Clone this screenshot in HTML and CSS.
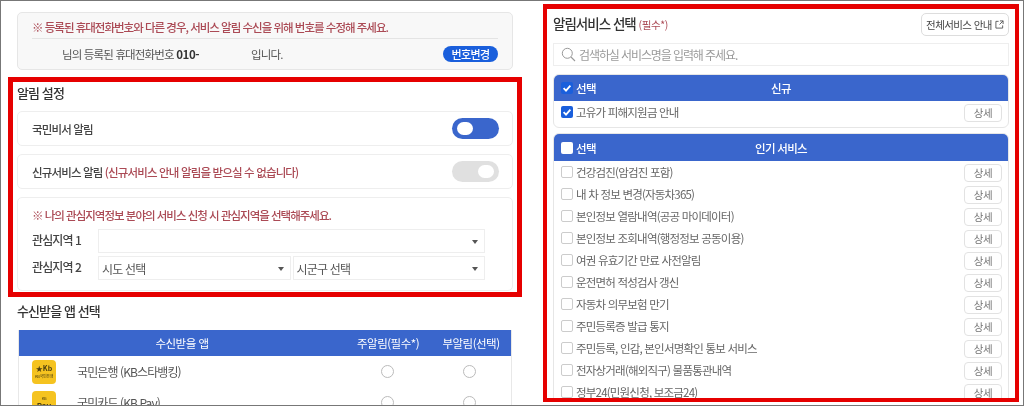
FILE: index.html
```html
<!DOCTYPE html>
<html lang="ko">
<head>
<meta charset="utf-8">
<title>알림 설정</title>
<link rel="stylesheet" href="styles.css">
</head>
<body>
<div class="frame">
  <div class="left">
    <div class="info">
      <p class="warn info-warn">※ 등록된 휴대전화번호와 다른 경우, 서비스 알림 수신을 위해 번호를 수정해 주세요.</p>
      <div class="info-line">
        <span class="info-a">님의 등록된 휴대전화번호 <b>010-</b></span>
        <span class="info-b">입니다.</span>
        <span class="change">번호변경</span>
      </div>
    </div>
    <section class="red-left">
      <h2 class="title-a">알림 설정</h2>
      <div class="card">
        <span class="card-label">국민비서 알림</span>
        <span class="toggle on"><i></i></span>
      </div>
      <div class="card">
        <span class="card-label">신규서비스 알림 <em class="warn-inline">(신규서비스 안내 알림을 받으실 수 없습니다)</em></span>
        <span class="toggle off"><i></i></span>
      </div>
      <div class="area">
        <p class="warn area-warn">※ 나의 관심지역정보 분야의 서비스 신청 시 관심지역을 선택해주세요.</p>
        <div class="area-row">
          <span class="area-label">관심지역 1</span>
          <div class="sel sel-wide"></div>
        </div>
        <div class="area-row second">
          <span class="area-label">관심지역 2</span>
          <div class="sel">시도 선택</div>
          <div class="sel">시군구 선택</div>
        </div>
      </div>
    </section>
    <h2 class="title-b">수신받을 앱 선택</h2>
    <div class="apps">
      <div class="apps-head">
        <span class="col-name">수신받을 앱</span>
        <span class="col-main">주알림(필수*)</span>
        <span class="col-sub">부알림(선택)</span>
      </div>
      <div class="app-row">
        <span class="app-icon"><span class="kb-star">★Kb</span><span class="kb-tiny">KB국민은행</span></span>
        <span class="app-name">국민은행 (KB스타뱅킹)</span>
        <span class="radio r-main"></span>
        <span class="radio r-sub"></span>
      </div>
      <div class="app-row">
        <span class="app-icon"><span class="kb-tiny">KB</span><span class="kb-pay">Pay</span></span>
        <span class="app-name">국민카드 (KB Pay)</span>
        <span class="radio r-main"></span>
        <span class="radio r-sub"></span>
      </div>
    </div>
  </div>

  <section class="red-right">
    <div class="right-head">
      <h2 class="title-c">알림서비스 선택 <em class="req">(필수*)</em></h2>
      <span class="all-btn">전체서비스 안내
        <svg class="ext" viewBox="0 0 10 10" width="9" height="9"><path d="M4 1.5H1v7.5h7.5V6M5.5 1H9v3.5M9 1 5 5" fill="none" stroke="#555" stroke-width="1"/></svg>
      </span>
    </div>
    <div class="search">
      <svg viewBox="0 0 15 15" width="15" height="15"><circle cx="6.3" cy="6.3" r="5" fill="none" stroke="#999" stroke-width="1"/><path d="M10 10l4 4" stroke="#999" stroke-width="1.1"/></svg>
      <span>검색하실 서비스명을 입력해 주세요.</span>
    </div>
    <div class="group g-new">
      <div class="group-head">
        <span class="box head-on"><svg viewBox="0 0 12 12"><path d="M2.6 6.2 5 8.6 9.4 3.6" fill="none" stroke="#fff" stroke-width="1.8"/></svg></span>
        <span class="pick">선택</span>
        <span class="group-name">신규</span>
      </div>
      <div class="svc">
        <span class="box checked"><svg viewBox="0 0 12 12"><path d="M2.6 6.2 5 8.6 9.4 3.6" fill="none" stroke="#fff" stroke-width="1.8"/></svg></span>
        <span class="svc-name">고유가 피해지원금 안내</span>
        <span class="detail">상세</span>
      </div>
    </div>
    <div class="group g-pop">
      <div class="group-head tall">
        <span class="box head-off"></span>
        <span class="pick">선택</span>
        <span class="group-name">인기 서비스</span>
      </div>
      <div class="svc"><span class="box"></span><span class="svc-name">건강검진(암검진 포함)</span><span class="detail">상세</span></div>
      <div class="svc"><span class="box"></span><span class="svc-name">내 차 정보 변경(자동차365)</span><span class="detail">상세</span></div>
      <div class="svc"><span class="box"></span><span class="svc-name">본인정보 열람내역(공공 마이데이터)</span><span class="detail">상세</span></div>
      <div class="svc"><span class="box"></span><span class="svc-name">본인정보 조회내역(행정정보 공동이용)</span><span class="detail">상세</span></div>
      <div class="svc"><span class="box"></span><span class="svc-name">여권 유효기간 만료 사전알림</span><span class="detail">상세</span></div>
      <div class="svc"><span class="box"></span><span class="svc-name">운전면허 적성검사 갱신</span><span class="detail">상세</span></div>
      <div class="svc"><span class="box"></span><span class="svc-name">자동차 의무보험 만기</span><span class="detail">상세</span></div>
      <div class="svc"><span class="box"></span><span class="svc-name">주민등록증 발급 통지</span><span class="detail">상세</span></div>
      <div class="svc"><span class="box"></span><span class="svc-name">주민등록, 인감, 본인서명확인 통보 서비스</span><span class="detail">상세</span></div>
      <div class="svc"><span class="box"></span><span class="svc-name">전자상거래(해외직구) 물품통관내역</span><span class="detail">상세</span></div>
      <div class="svc"><span class="box"></span><span class="svc-name">정부24(민원신청, 보조금24)</span><span class="detail">상세</span></div>
    </div>
  </section>
</div>
</body>
</html>
```

FILE: styles.css
```css
* { box-sizing: border-box; }
html, body { margin: 0; padding: 0; background: #fff; }
body { font-family: "Noto Sans CJK KR", "Noto Sans", sans-serif; color: #444; }
h2, p { margin: 0; }
em { font-style: normal; }

.frame {
  width: 1024px;
  height: 406px;
  border: 1px solid #777;
  overflow: hidden;
  display: flex;
  align-items: flex-start;
  padding-left: 7px;
  padding-top: 3px;
  background: #fff;
  filter: blur(0.35px);
}

/* left column */
.left { width: 514px; flex: none; padding-top: 8px; }
.info {
  margin: 0 9px;
  height: 58px;
  background: #f8f8f8;
  border: 1px solid #e6e6e6;
  border-radius: 5px;
  padding: 0 14px;
}
.warn { color: #ab4a55; font-weight: 500; font-size: 11.5px; line-height: 16px; letter-spacing: -1px; }
.info-warn { height: 26px; padding-top: 6px; border-bottom: 1px solid #e4e4e4; }
.info-line { display: flex; align-items: center; height: 30px; font-size: 11.5px; color: #555; letter-spacing: -0.85px; }
.info-a { margin-left: 30px; width: 189px; flex: none; }
.info-a b { color: #333; letter-spacing: -0.4px; }
.info-b { flex: 1; }
.change {
  width: 55px; height: 16px; line-height: 16px;
  background: #1a5fdc; color: #fff; border-radius: 8px;
  text-align: center; font-size: 11px; font-weight: 500; letter-spacing: -0.6px;
}

.red-left {
  margin-top: 7px;
  height: 220px;
  border: 5px solid #e60000;
  padding: 0 4px;
  overflow: hidden;
}
.title-a { font-size: 13px; font-weight: 500; line-height: 20px; margin-top: 1px; color: #333; letter-spacing: -0.9px; }
.card {
  height: 35px;
  margin-top: 8px;
  border: 1px solid #eee;
  border-radius: 5px;
  padding: 0 13px 0 14px;
  display: flex;
  align-items: center;
  justify-content: space-between;
}
.card-label { font-size: 11.5px; font-weight: 500; color: #444; letter-spacing: -0.85px; }
.warn-inline { color: #ab4a55; }
.toggle { width: 47px; height: 21px; border-radius: 11px; display: flex; align-items: center; padding: 0 5px; }
.toggle i { display: block; width: 16px; height: 13px; border-radius: 7px; background: #fff; }
.toggle.on { background: #3a66cc; }
.toggle.off { background: #e0e0e0; justify-content: flex-end; }

.area {
  margin-top: 8px;
  height: 94px;
  border: 1px solid #eee;
  border-radius: 5px;
  padding: 9px 27px 0 14px;
}
.area-warn { height: 22px; }
.area-row { display: flex; height: 24px; gap: 2px; }
.area-row.second { margin-top: 3px; }
.area-label { width: 66px; flex: none; font-size: 12px; font-weight: 500; line-height: 21px; color: #444; letter-spacing: -0.9px; margin-right: -2px; }
.sel {
  flex: 1;
  position: relative;
  border: 1px solid #eee;
  font-size: 12px;
  letter-spacing: -0.8px;
  color: #555;
  line-height: 23px;
  padding-left: 3px;
}
.sel::after {
  content: "";
  position: absolute;
  right: 6px;
  top: 10px;
  border: 3px solid transparent;
  border-top: 4px solid #555;
  border-bottom: 0;
}

.title-b { font-size: 13px; font-weight: 500; line-height: 20px; margin: 4px 0 0 9px; color: #333; letter-spacing: -0.9px; }
.apps { margin: 9px 10px 0 10px; border: 1px solid #e8e8e8; border-top: 0; height: 90px; }
.apps-head {
  height: 26px;
  background: #3a66cc;
  color: #fff;
  display: flex;
  align-items: center;
  font-size: 11.5px;
  letter-spacing: -0.5px;
}
.apps-head span { text-align: center; }
.col-name { width: 326px; }
.col-main { width: 86px; }
.col-sub { width: 80px; }
.app-row { display: flex; align-items: center; height: 31px; position: relative; }
.app-icon {
  width: 24px; height: 24px;
  margin-left: 13px;
  background: #f5c320;
  border-radius: 4px;
  display: flex;
  flex-direction: column;
  align-items: center;
  justify-content: center;
  color: #4a3d10;
  overflow: hidden;
  flex: none;
}
.kb-star { font-size: 7px; line-height: 9px; font-weight: 700; }
.kb-tiny { font-size: 4px; line-height: 6px; letter-spacing: -0.3px; }
.kb-pay { font-size: 8px; line-height: 9px; font-weight: 700; }
.app-name { margin-left: 21px; font-size: 12px; color: #555; letter-spacing: -0.9px; }
.radio {
  position: absolute;
  top: 9px;
  width: 13px; height: 13px;
  border: 1px solid #bbb;
  border-radius: 50%;
  background: #fff;
}
.r-main { left: 362px; }
.r-sub { left: 444px; }

/* right column */
.red-right {
  margin-left: 21px;
  width: 476px;
  flex: none;
  height: 398px;
  border: 4px solid #e60000;
  border-top-width: 5px;
  padding: 0 6px;
  overflow: hidden;
}
.right-head { display: flex; justify-content: space-between; align-items: flex-start; height: 34px; padding-top: 4px; }
.title-c { font-size: 13.5px; font-weight: 500; color: #333; line-height: 20px; letter-spacing: -1px; }
.req { font-size: 10.5px; color: #ab4a55; font-weight: 400; letter-spacing: -0.4px; }
.all-btn {
  width: 88px; height: 23px;
  border: 1px solid #ddd;
  border-radius: 5px;
  font-size: 10.5px;
  color: #444;
  letter-spacing: -0.6px;
  display: flex;
  align-items: center;
  justify-content: center;
  gap: 3px;
}
.ext { flex: none; }
.search {
  height: 23px;
  border: 1px solid #eee;
  display: flex;
  align-items: center;
  gap: 3px;
  padding-left: 7px;
  font-size: 12px;
  letter-spacing: -1.1px;
  color: #9a9a9a;
}
.group { border: 1px solid #e6e6e6; border-radius: 6px; overflow: hidden; }
.g-new { margin-top: 8px; height: 54px; }
.g-pop { margin-top: 5px; height: 300px; }
.group-head {
  height: 26px;
  background: #3a66cc;
  color: #fff;
  display: flex;
  align-items: center;
  padding-left: 7px;
  position: relative;
  font-size: 11.5px;
  font-weight: 500;
  letter-spacing: -0.7px;
}
.group-head.tall { height: 27px; }
.group-name { position: absolute; left: 0; right: 0; text-align: center; }
.pick { margin-left: 3px; }
.box {
  width: 12px; height: 12px;
  border: 1px solid #ccc;
  border-radius: 2px;
  background: #fff;
  flex: none;
  display: block;
}
.box svg { display: block; width: 100%; height: 100%; }
.box.head-off { border: 0; }
.box.head-on, .box.checked { background: #1a5fdc; border: 0; }
.svc { height: 22px; display: flex; align-items: center; padding: 0 6px 0 7px; }
.group-head + .svc { margin-top: 1px; }
.svc-name { flex: 1; margin-left: 3px; font-size: 11.5px; color: #666; line-height: 16px; margin-top: -3px; letter-spacing: -0.8px; }
.svc .box { margin-top: -2px; }
.detail {
  width: 38px; height: 18px; line-height: 16px;
  border: 1px solid #e2e2e2;
  border-radius: 4px;
  text-align: center;
  font-size: 10.5px;
  letter-spacing: -0.5px;
  color: #777;
  background: #fff;
}
```
